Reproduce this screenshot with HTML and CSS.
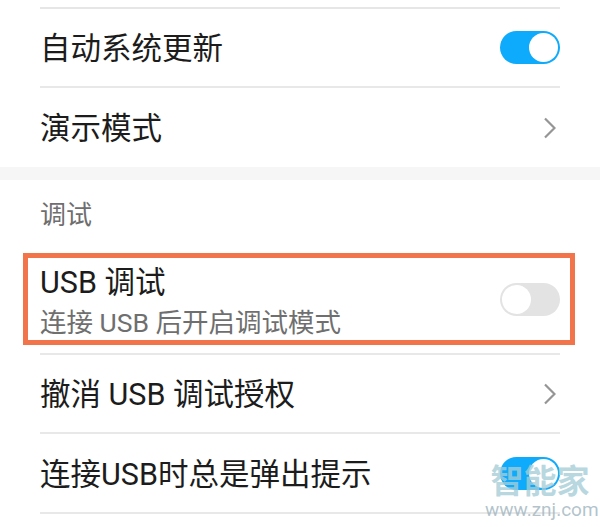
FILE: index.html
```html
<!DOCTYPE html>
<html lang="zh-CN">

<head>
  <meta charset="UTF-8" />
  <title>开发者选项</title>
  <link rel="stylesheet" href="styles.css">
</head>

<body>
  <div class="screen">
    <div class="group top-group">
      <div class="row">
        <span class="title">自动系统更新</span>
        <span class="switch on"><span class="knob"></span></span>
      </div>
      <div class="row last">
        <span class="title">演示模式</span>
        <svg class="chevron" width="14" height="22" viewBox="0 0 14 22">
          <path d="M3 1.500 L12.500 11 L3 20.500" fill="none" stroke="#959595" stroke-width="2.200" />
        </svg>
      </div>
    </div>

    <div class="band"></div>

    <div class="group">
      <div class="section-title">调试</div>
      <div class="row highlight">
        <div class="text">
          <span class="title">USB 调试</span>
          <span class="sub">连接 USB 后开启调试模式</span>
        </div>
        <span class="switch"><span class="knob"></span></span>
      </div>
      <div class="row">
        <span class="title">撤消 USB 调试授权</span>
        <svg class="chevron" width="14" height="22" viewBox="0 0 14 22">
          <path d="M3 1.500 L12.500 11 L3 20.500" fill="none" stroke="#959595" stroke-width="2.200" />
        </svg>
      </div>
      <div class="row">
        <span class="title">连接USB时总是弹出提示</span>
        <span class="switch on"><span class="knob"></span></span>
      </div>
    </div>
  </div>

  <div class="watermark">
    <div class="wm-name">智能家</div>
    <div class="wm-url">www.znj.com</div>
  </div>
</body>

</html>
```

FILE: styles.css
```css
* {
  box-sizing: border-box;
  margin: 0;
  padding: 0;
}

body {
  width: 600px;
  height: 527px;
  overflow: hidden;
  background-color: #fff;
  color: #1c1c1c;
  font-family: Roboto, "Noto Sans CJK SC", sans-serif;
  position: relative;
}

.group {
  padding: 0 40px;
}

.top-group {
  padding-top: 7px;
}

.top-group .row:first-child {
  border-top: 2px solid #e6e6e6;
  height: 81px;
}

.row {
  display: flex;
  align-items: center;
  justify-content: space-between;
  height: 80px;
  border-bottom: 2px solid #e8e8e8;
}

.row.last {
  border-bottom: none;
  height: 79px;
}

.title {
  font-size: 30.500px;
  line-height: 40px;
  padding-top: 3px;
}

.band {
  height: 13px;
  background-color: #f6f6f6;
}

.section-title {
  height: 73px;
  padding-top: 18px;
  font-size: 26px;
  line-height: 34px;
  color: #6e6e6e;
}

.row.highlight {
  height: 92px;
  margin: 0 -15px 8px -17px;
  padding: 0 10px 0 12px;
  border: 5px solid #f2744a;
}

.highlight + .row {
  height: 81px;
  border-top: 2px solid #e8e8e8;
}

.text {
  display: flex;
  flex-direction: column;
  gap: 2px;
  padding-top: 7px;
}

.text .title {
  line-height: 38px;
  padding-top: 0;
}

.sub {
  font-size: 26.500px;
  line-height: 38px;
  color: #6f6f6f;
}

.switch {
  display: flex;
  width: 60px;
  height: 33px;
  padding: 2px;
  border-radius: 17px;
  background-color: #e3e3e3;
}

.switch.on {
  justify-content: flex-end;
  background-color: #0eaafb;
}

.knob {
  width: 29px;
  height: 29px;
  border-radius: 50%;
  background-color: #fff;
}

.chevron {
  margin-right: 4px;
}

.watermark {
  position: absolute;
  left: 485px;
  top: 463px;
  width: 110px;
  text-align: center;
  white-space: nowrap;
  color: rgba(165, 205, 215, 0.8);
}

.wm-name {
  font-size: 33px;
  line-height: 38px;
  font-weight: 700;
}

.wm-url {
  font-size: 19px;
  line-height: 18px;
  color: rgba(165, 185, 195, 0.85);
}
```
